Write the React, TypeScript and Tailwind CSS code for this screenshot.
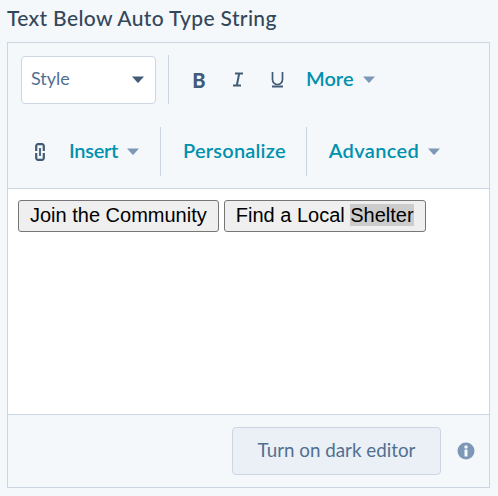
const Caret = ({ color = "#7c98b6", className = "" }: { color?: string; className?: string }) => (
  <svg width="12" height="7" viewBox="0 0 12 7" className={className}>
    <path d="M0 0.5h12L6.6 6.4a.8.8 0 0 1-1.2 0z" fill={color} />
  </svg>
);

const Divider = () => <div className="w-px h-[49px] bg-[#cbd6e2]" />;

const ToolIcon = ({ children }: { children: React.ReactNode }) => (
  <span className="w-[14px] h-[18px] flex items-center justify-center">{children}</span>
);

const MenuLabel = ({ label, className = "" }: { label: string; className?: string }) => (
  <span className={`flex items-center gap-[9px] text-[20px] font-semibold text-[#0091ae] ${className}`}>
    <span className="pb-[4px]">{label}</span>
    <Caret className="mt-[-1px]" />
  </span>
);

const App = () => {
  return (
    <div className="w-[498px] h-[496px] bg-[#f5f8fa] pl-[7px] pr-[8px] pt-[6px] font-['Lato',sans-serif] text-[#33475b] overflow-hidden">
      <h3 className="h-[36px] text-[21px] leading-[24px] font-medium text-[#33475b] tracking-[0.35px]">Text Below Auto Type String</h3>

      <div className="h-[446px] border border-[#cbd6e2] flex flex-col">
        {/* toolbar */}
        <div className="h-[146px] border-b border-[#cbd6e2] pt-[12px] bg-[#f5f8fa]">
          <div className="flex items-center h-[49px] pl-[13px]">
            <div className="w-[135px] h-[48px] bg-white border border-[#cbd6e2] rounded-[4px] flex items-center justify-between pl-[9px] pr-[11px] text-[#516f90] text-[18px]">
              <span className="pb-[2px]">Style</span>
              <Caret color="#425b76" />
            </div>
            <div className="ml-[12px] mr-[23px]"><Divider /></div>
            <div className="flex items-center gap-[25px]">
              <ToolIcon><span className="font-black text-[20px] leading-none text-[#425b76]">B</span></ToolIcon>
              <ToolIcon>
                <svg width="12" height="15" viewBox="0 0 12 15" fill="none" stroke="#425b76" strokeWidth="2">
                  <path d="M3 1.500h8M1 13.500h8M7.200 1.500L4.800 13.500" />
                </svg>
              </ToolIcon>
              <ToolIcon>
                <svg width="13" height="17" viewBox="0 0 13 17" fill="none" stroke="#425b76" strokeWidth="1.700">
                  <path d="M1.500 1v7.500a5 5 0 0 0 10 0V1" />
                  <path d="M1 15.500h11" strokeWidth="2" />
                </svg>
              </ToolIcon>
            </div>
            <div className="ml-[22px]"><MenuLabel label="More" /></div>
          </div>
          <div className="flex items-center h-[49px] mt-[23px] pl-[25px]">
            <ToolIcon>
              <svg width="10" height="18" viewBox="0 0 10 18" fill="none" stroke="#425b76">
                <path d="M1.200 8V3A1.800 1.800 0 0 1 3 1.200h4A1.800 1.800 0 0 1 8.800 3v5M1.200 10v5A1.800 1.800 0 0 0 3 16.800h4A1.800 1.800 0 0 0 8.800 15v-5" strokeWidth="2.200" />
                <path d="M5 5v8" strokeWidth="1.800" />
              </svg>
            </ToolIcon>
            <div className="ml-[22px] mr-[21px]"><MenuLabel label="Insert" className="tracking-[-0.3px]" /></div>
            <Divider />
            <span className="ml-[22px] mr-[20px] pb-[4px] text-[20px] font-semibold text-[#0091ae] tracking-[0.2px]">Personalize</span>
            <Divider />
            <div className="ml-[22px]"><MenuLabel label="Advanced" className="tracking-[0.35px]" /></div>
          </div>
        </div>

        {/* editor */}
        <div className="flex-1 bg-white border-b border-[#cbd6e2] pl-[10px] pt-[11px] flex items-start gap-[5px] font-['Liberation_Sans',sans-serif] text-[20px] leading-[23px] text-black">
          <button className="h-[32px] px-[11px] pb-[2px] bg-[#efefef] border border-[#767676] rounded-[3px]">Join the Community</button>
          <button className="h-[32px] px-[11px] pb-[2px] bg-[#efefef] border border-[#767676] rounded-[3px]">
            Find a Local <span className="bg-[#cccccc]">Shelter</span>
          </button>
        </div>

        {/* footer */}
        <div className="h-[72px] flex items-center justify-end pr-[14px] bg-[#f5f8fa]">
          <button className="w-[209px] h-[48px] pb-[2px] bg-[#eaf0f6] border border-[#cbd6e2] rounded-[4px] text-[#516f90] text-[18.8px] font-normal">Turn on dark editor</button>
          <svg width="18" height="18" viewBox="0 0 18 18" className="ml-[16px]">
            <circle cx="9" cy="9" r="8.500" fill="#7c98b6" />
            <circle cx="9" cy="5" r="1.700" fill="#f5f8fa" />
            <rect x="7.500" y="7.600" width="3" height="7" rx="0.500" fill="#f5f8fa" />
          </svg>
        </div>
      </div>
    </div>
  );
};

export default App;
